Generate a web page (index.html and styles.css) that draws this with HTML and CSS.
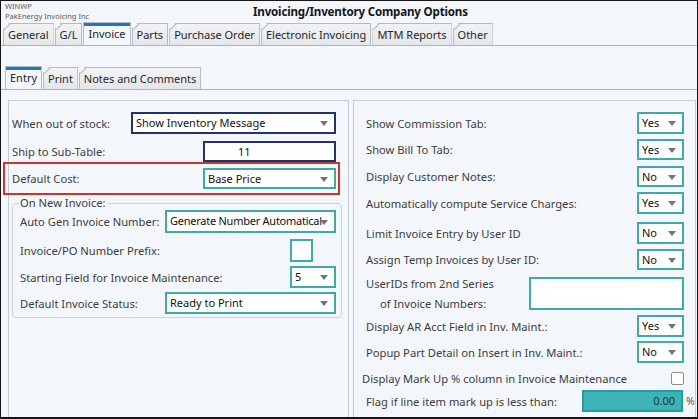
FILE: index.html
```html
<!DOCTYPE html>
<html>
<head>
<meta charset="utf-8">
<title>Invoicing/Inventory Company Options</title>
<link rel="stylesheet" href="styles.css">
</head>
<body>
<div class="window">
  <header class="titlebar">
    <div class="brand">
      <div class="brand-app">WINWP</div>
      <div class="brand-co">PakEnergy Invoicing Inc</div>
    </div>
    <h1 class="title">Invoicing/Inventory Company Options</h1>
  </header>

  <nav class="tabs tabs-main">
    <div class="tab first">General</div>
    <div class="tab">G/L</div>
    <div class="tab active">Invoice</div>
    <div class="tab">Parts</div>
    <div class="tab">Purchase Order</div>
    <div class="tab">Electronic Invoicing</div>
    <div class="tab">MTM Reports</div>
    <div class="tab">Other</div>
  </nav>

  <nav class="tabs tabs-sub">
    <div class="tab first active">Entry</div>
    <div class="tab">Print</div>
    <div class="tab">Notes and Comments</div>
  </nav>

  <main class="panels">
    <section class="panel panel-left">
      <div class="row r-stock">
        <span class="lbl">When out of stock:</span>
        <div class="ctl sel navy w-stock">Show Inventory Message</div>
      </div>
      <div class="row r-ship">
        <span class="lbl">Ship to Sub-Table:</span>
        <div class="ctl navy w-ship num">11</div>
      </div>
      <div class="row r-cost">
        <span class="lbl">Default Cost:</span>
        <div class="ctl sel teal w-ship">Base Price</div>
      </div>

      <fieldset class="group">
        <legend>On New Invoice:</legend>
        <div class="row g-auto">
          <span class="lbl">Auto Gen Invoice Number:</span>
          <div class="ctl sel teal w-wide"><span class="clip-text">Generate Number Automatically</span></div>
        </div>
        <div class="row g-prefix">
          <span class="lbl">Invoice/PO Number Prefix:</span>
          <div class="ctl teal w-sq"></div>
        </div>
        <div class="row g-start">
          <span class="lbl">Starting Field for Invoice Maintenance:</span>
          <div class="ctl sel teal w-small">5</div>
        </div>
        <div class="row g-status">
          <span class="lbl">Default Invoice Status:</span>
          <div class="ctl sel teal w-wide">Ready to Print</div>
        </div>
      </fieldset>
    </section>

    <section class="panel panel-right">
      <div class="row rr h22">
        <span class="lbl">Show Commission Tab:</span>
        <div class="ctl sel teal w-yn">Yes</div>
      </div>
      <div class="row rr h21 mb6">
        <span class="lbl">Show Bill To Tab:</span>
        <div class="ctl sel teal w-yn">Yes</div>
      </div>
      <div class="row rr h21">
        <span class="lbl">Display Customer Notes:</span>
        <div class="ctl sel teal w-yn">No</div>
      </div>
      <div class="row rr h22 mb8">
        <span class="lbl">Automatically compute Service Charges:</span>
        <div class="ctl sel teal w-yn">Yes</div>
      </div>
      <div class="row rr h22">
        <span class="lbl">Limit Invoice Entry by User ID</span>
        <div class="ctl sel teal w-yn">No</div>
      </div>
      <div class="row rr h21 mb7">
        <span class="lbl">Assign Temp Invoices by User ID:</span>
        <div class="ctl sel teal w-yn">No</div>
      </div>
      <div class="row rr h33">
        <span class="lbl two">UserIDs from 2nd Series<br><span class="indent">of Invoice Numbers:</span></span>
        <div class="ctl teal w-users"></div>
      </div>
      <div class="row rr h22 mb4">
        <span class="lbl">Display AR Acct Field in Inv. Maint.:</span>
        <div class="ctl sel teal w-yn">Yes</div>
      </div>
      <div class="row rr h22 mb8">
        <span class="lbl">Popup Part Detail on Insert in Inv. Maint.:</span>
        <div class="ctl sel teal w-yn">No</div>
      </div>
      <div class="row rr h14 check-row">
        <span class="lbl">Display Mark Up % column in Invoice Maintenance</span>
        <div class="checkbox"></div>
      </div>
      <div class="row rr h22 flag-row">
        <span class="lbl">Flag if line item mark up is less than:</span>
        <div class="ctl filled">0.00</div>
        <span class="pct">%</span>
      </div>
    </section>
  </main>
</div>
</body>
</html>
```

FILE: styles.css
```css
* { box-sizing: border-box; }

html, body {
  margin: 0;
  padding: 0;
}

body {
  width: 698px;
  height: 419px;
  overflow: hidden;
  background: #151515;
  font-family: "Noto Sans", "Open Sans", sans-serif;
  font-size: 11.2px;
  color: #3a3a3a;
}

.window {
  margin: 1px 1px 2px 1px;
  height: 416px;
  background: #f3f7fb;
  display: flex;
  flex-direction: column;
  overflow: hidden;
}

/* ---------- title bar ---------- */
.titlebar {
  height: 22px;
  flex-shrink: 0;
  display: flex;
  align-items: center;
}

.brand {
  width: 252px;
  padding-left: 4px;
  color: #5a5a5a;
  font-size: 7.5px;
  line-height: 9px;
}

.brand-app { margin-top: -1px; }
.brand-co { margin-top: 1px; }

.title {
  margin: 0;
  font-size: 11.6px;
  font-weight: 700;
  letter-spacing: -0.2px;
  color: #151515;
  line-height: 16px;
}

/* ---------- tabs ---------- */
.tabs {
  display: flex;
  align-items: flex-end;
  flex-shrink: 0;
  padding-left: 2px;
  border-bottom: 1px solid #aab2ba;
}

.tabs-main { height: 23px; }

.tabs-sub {
  height: 23px;
  margin-top: 21px;
  padding-left: 4px;
}

.tab {
  position: relative;
  height: 22px;
  line-height: 21px;
  padding: 0 4px;
  margin-right: 1px;
  font-size: 11px;
  color: #262626;
  border: 1px solid #b3bbc3;
  border-bottom: none;
  background: linear-gradient(#f2f3f4, #e4e7ea);
  clip-path: polygon(6px 0, 100% 0, 100% 100%, 0 100%, 0 6px);
}

.tab::before {
  content: "";
  position: absolute;
  left: -1px;
  top: 2px;
  width: 9px;
  height: 1px;
  background: #b3bbc3;
  transform: rotate(-45deg);
  transform-origin: center;
}

.tab.active {
  height: 23px;
  background: #f3f7fb;
  clip-path: none;
}

.tab.active::before {
  left: 0;
  top: 0;
  width: 100%;
  height: 3px;
  background: #2274c4;
  transform: none;
}

/* ---------- panels ---------- */
.panels {
  flex: 1;
  display: flex;
  margin-top: 10px;
  padding-left: 7px;
  gap: 4px;
}

.panel {
  border: 1px solid #c3ccd4;
  border-bottom: none;
  padding-top: 11px;
}

.panel-left {
  width: 341px;
  padding-left: 3px;
  padding-right: 12px;
}

.panel-right {
  width: 343px;
  padding-left: 12px;
  padding-right: 11px;
}

.row {
  display: flex;
  align-items: center;
}

.lbl {
  white-space: nowrap;
  color: #3c3c3c;
}

.ctl {
  margin-left: auto;
  flex-shrink: 0;
  position: relative;
  background: #ffffff;
  color: #111111;
  font-size: 11px;
  line-height: 17px;
  padding-left: 3px;
  white-space: nowrap;
  overflow: hidden;
}

.navy { border: 2px solid #20336c; }
.teal { border: 2px solid #40aaa9; }

.sel { padding-right: 20px; }

.sel::after {
  content: "";
  position: absolute;
  right: 6px;
  top: 50%;
  margin-top: -2px;
  border-left: 4px solid transparent;
  border-right: 4px solid transparent;
  border-top: 5px solid #747474;
}

.clip-text {
  display: block;
  width: 152px;
  overflow: hidden;
  white-space: nowrap;
  letter-spacing: -0.25px;
}

/* left panel rows */
.r-stock { height: 22px; margin-bottom: 7px; }
.r-ship { height: 21px; }
.w-stock { width: 205px; height: 22px; }
.w-ship { width: 133px; height: 21px; }
.num { padding-left: 33px; }

.r-cost {
  height: 33px;
  margin-left: -9px;
  margin-right: -4px;
  padding-left: 7px;
  padding-right: 2px;
  border: 2px solid #c8372e;
}

.group {
  margin: 1px -6px 0 0;
  padding: 0 5px 3px 6px;
  border: 1px solid #c9d2da;
  border-radius: 4px;
}

.group legend {
  padding: 0 1px;
  line-height: 14px;
  color: #3c3c3c;
}

.g-auto { height: 23px; margin-bottom: 6px; }
.g-prefix { height: 23px; margin-bottom: 4px; }
.g-start { height: 22px; margin-bottom: 4px; }
.g-status { height: 22px; }

.w-wide { width: 171px; height: 100%; }
.w-sq { width: 23px; height: 23px; margin-right: 23px; }
.w-small { width: 46px; height: 22px; }

.g-auto .lbl,
.g-prefix .lbl,
.g-start .lbl,
.g-status .lbl { padding-left: 1px; }

/* right panel rows */
.rr { margin-bottom: 5px; }
.h14 { height: 14px; }
.h21 { height: 21px; }
.h22 { height: 22px; }
.h33 { height: 33px; }
.mb4 { margin-bottom: 4px; }
.mb6 { margin-bottom: 6px; }
.mb7 { margin-bottom: 7px; }
.mb8 { margin-bottom: 8px; }

.w-yn { width: 47px; height: 100%; }
.w-users { width: 155px; height: 33px; }

.two { line-height: 20px; }
.indent { padding-left: 14px; }

.check-row { margin-left: -4px; margin-top: 1px; margin-bottom: 5px; }

.checkbox {
  margin-left: auto;
  width: 13px;
  height: 13px;
  border: 1px solid #8c8c8c;
  border-radius: 2px;
  background: #ffffff;
}

.flag-row { margin-right: -10px; }

.filled {
  width: 101px;
  height: 22px;
  background: #3cb4b7;
  border: 2px solid #2a9aa0;
  text-align: right;
  padding-right: 6px;
  color: #1c3336;
}

.pct {
  width: 11px;
  padding-left: 3px;
  font-size: 10.5px;
  color: #555555;
  overflow: visible;
}
```
